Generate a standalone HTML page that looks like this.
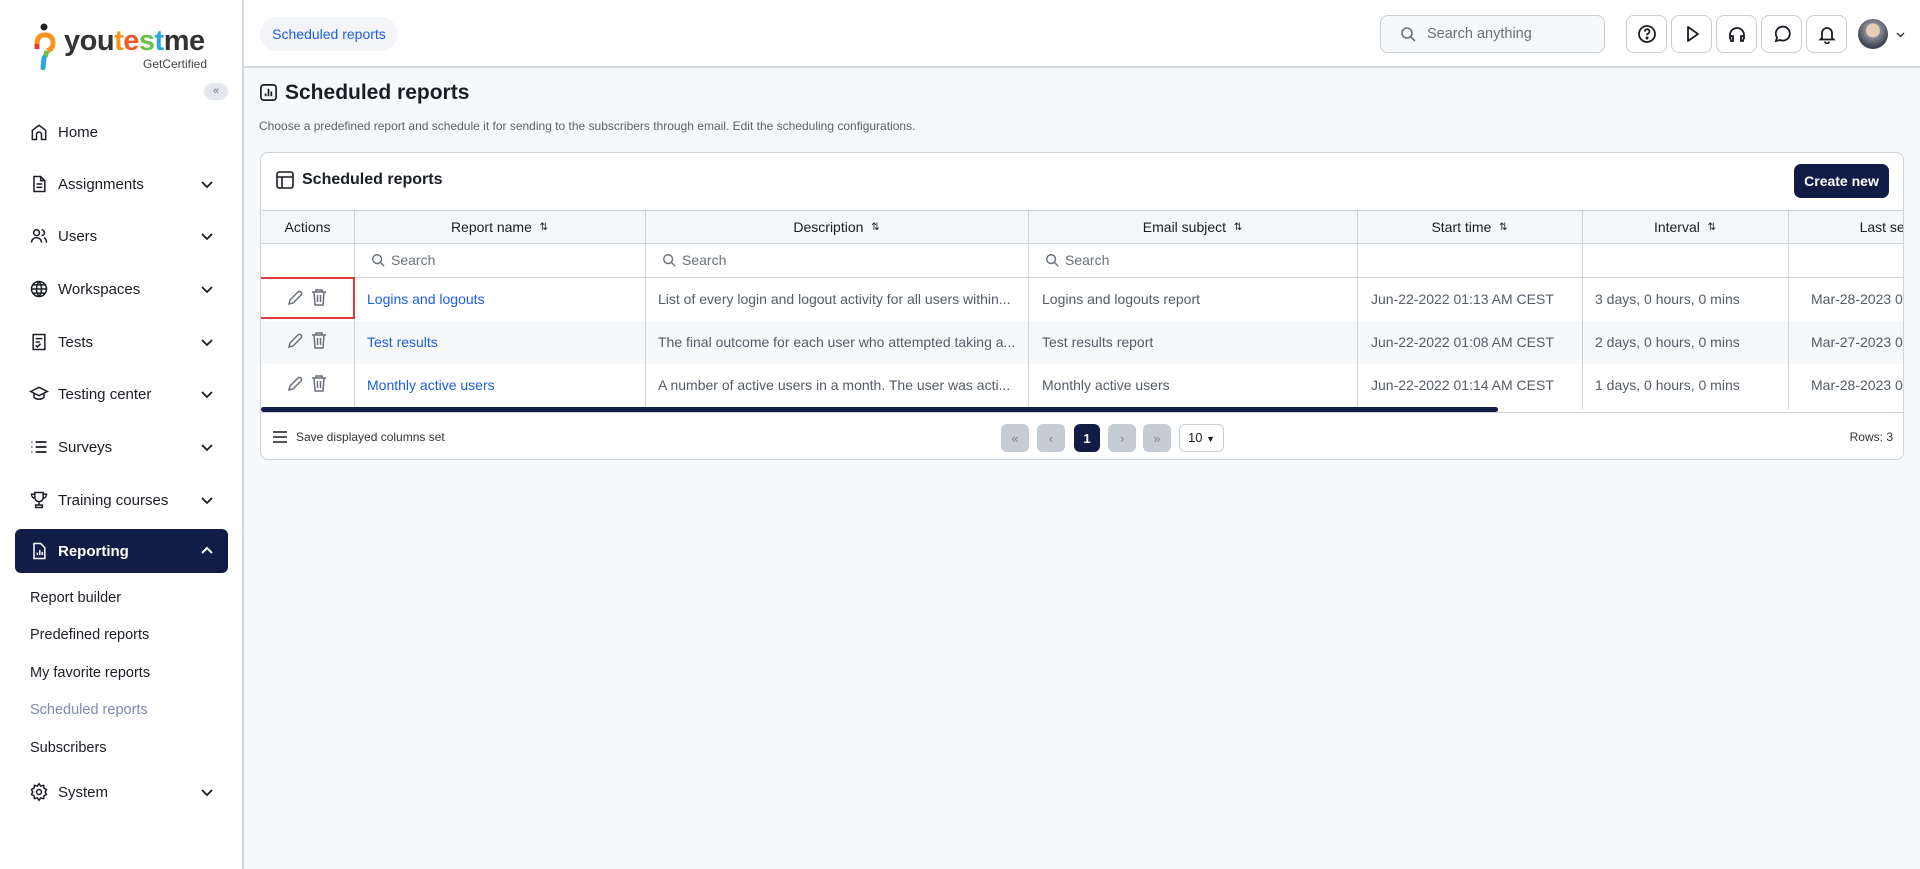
<!DOCTYPE html>
<html><head><meta charset="utf-8"><style>
*{box-sizing:border-box;margin:0;padding:0}
body{width:1920px;height:869px;overflow:hidden;background:#f7f8fa;font-family:"Liberation Sans",sans-serif;color:#1a1d24;position:relative}
.sb{position:absolute;left:0;top:0;width:244px;height:869px;background:#fff;border-right:2px solid #d6dbe1}
.abs{position:absolute}
.mi{position:absolute;left:29px;width:200px;height:30px;display:flex;align-items:center;font-size:15px;color:#1a1d24}
.mi svg.ic{width:20px;height:20px;margin-right:9px;flex:none}
.mi .chev{position:absolute;left:170px;width:16px;height:16px}
.sub{position:absolute;left:30px;font-size:14.5px;color:#1a1d24}
.top{position:absolute;left:244px;top:0;width:1676px;height:68px;background:#fff;border-bottom:2px solid #d6dbe1}
.ib{position:absolute;top:15px;width:41px;height:38px;border:1px solid #c7ced6;border-radius:8px;background:#fff;display:flex;align-items:center;justify-content:center}
.card{position:absolute;left:260px;top:152px;width:1644px;height:308px;background:#fff;border:1px solid #ccd3db;border-radius:8px;overflow:hidden}
.th{position:absolute;top:57px;height:34px;background:#f5f6f8;border-top:1px solid #ccd3db;border-bottom:1px solid #ccd3db;font-size:14px;display:flex;align-items:center;justify-content:center}
.col{position:absolute;top:57px;height:199px;border-left:1px solid #ccd3db}
.cell{position:absolute;font-size:14px;color:#555b66;white-space:nowrap}
.srch{position:absolute;font-size:14px;color:#6a707a;display:flex;align-items:center}
.srch svg{margin-right:6px}
.lnk{color:#1a5de6}
.pb{position:absolute;top:271px;width:28px;height:28px;border-radius:6px;background:#c5ccd5;color:#7d8693;font-size:13px;display:flex;align-items:center;justify-content:center}
</style></head><body>
<div class="sb">
 <svg class="abs" style="left:33px;top:22px" width="24" height="48" viewBox="0 0 24 48"><circle cx="11" cy="5" r="3.5" fill="#222"/><path d="M4 22 Q4 13 12 13 Q20 13 20 21 Q20 27 14 29" stroke="#f7941d" stroke-width="5" fill="none"/><path d="M14 29 L12 35" stroke="#6cc04a" stroke-width="5"/><path d="M11 36 L10 46" stroke="#29a8e0" stroke-width="5" stroke-linecap="round"/><path d="M4 22 L4 27" stroke="#e63c2f" stroke-width="5"/></svg>
 <div class="abs" style="left:64px;top:27px;font-size:29px;font-weight:bold;letter-spacing:-0.5px;line-height:1"><span style="color:#333">you</span><span style="color:#f7941d">t</span><span style="color:#f05a28">e</span><span style="color:#6cc04a">s</span><span style="color:#29a8e0">t</span><span style="color:#333">me</span></div>
 <div class="abs" style="left:143px;top:57px;font-size:12px;color:#444">GetCertified</div>
 <div class="abs" style="left:204px;top:83px;width:24px;height:17px;border-radius:8px;background:#e3e6ea;font-size:11px;color:#777;text-align:center;line-height:17px">«</div>

 <div class="mi" style="top:117px"><svg class="ic" viewBox="0 0 24 24" fill="none" stroke="#1a1d24" stroke-width="1.8"><path d="M4 21V10l8-6 8 6v11h-5v-6a3 3 0 0 0-6 0v6z"/></svg>Home</div>
 <div class="mi" style="top:169px"><svg class="ic" viewBox="0 0 24 24" fill="none" stroke="#1a1d24" stroke-width="1.8"><path d="M6 3h8l5 5v13H6z M14 3v5h5 M9 12h7 M9 16h7"/></svg>Assignments<svg class="chev" viewBox="0 0 16 16" fill="none" stroke="#1a1d24" stroke-width="1.8"><path d="M3 6l5 5 5-5"/></svg></div>
 <div class="mi" style="top:221px"><svg class="ic" viewBox="0 0 24 24" fill="none" stroke="#1a1d24" stroke-width="1.8"><circle cx="9" cy="8" r="3.5"/><path d="M3 20c0-4 3-6 6-6s6 2 6 6 M15 4.5a3.5 3.5 0 0 1 0 7 M18 14c2 1 3 3 3 6"/></svg>Users<svg class="chev" viewBox="0 0 16 16" fill="none" stroke="#1a1d24" stroke-width="1.8"><path d="M3 6l5 5 5-5"/></svg></div>
 <div class="mi" style="top:274px"><svg class="ic" viewBox="0 0 24 24" fill="none" stroke="#1a1d24" stroke-width="1.8"><circle cx="12" cy="12" r="9"/><path d="M3 12h18 M12 3c-4 5-4 13 0 18 M12 3c4 5 4 13 0 18 M5 7h14 M5 17h14"/></svg>Workspaces<svg class="chev" viewBox="0 0 16 16" fill="none" stroke="#1a1d24" stroke-width="1.8"><path d="M3 6l5 5 5-5"/></svg></div>
 <div class="mi" style="top:327px"><svg class="ic" viewBox="0 0 24 24" fill="none" stroke="#1a1d24" stroke-width="1.8"><path d="M5 3h14v18H5z M8 8h8 M8 12h5 M8 16l2 2 4-4"/></svg>Tests<svg class="chev" viewBox="0 0 16 16" fill="none" stroke="#1a1d24" stroke-width="1.8"><path d="M3 6l5 5 5-5"/></svg></div>
 <div class="mi" style="top:379px"><svg class="ic" viewBox="0 0 24 24" fill="none" stroke="#1a1d24" stroke-width="1.8"><path d="M2 9l10-5 10 5-10 5z M6 11v5c3 3 9 3 12 0v-5"/></svg>Testing center<svg class="chev" viewBox="0 0 16 16" fill="none" stroke="#1a1d24" stroke-width="1.8"><path d="M3 6l5 5 5-5"/></svg></div>
 <div class="mi" style="top:432px"><svg class="ic" viewBox="0 0 24 24" fill="none" stroke="#1a1d24" stroke-width="2"><path d="M8 6h13 M8 12h13 M8 18h13 M3 6h1 M3 12h1 M3 18h1"/></svg>Surveys<svg class="chev" viewBox="0 0 16 16" fill="none" stroke="#1a1d24" stroke-width="1.8"><path d="M3 6l5 5 5-5"/></svg></div>
 <div class="mi" style="top:485px"><svg class="ic" viewBox="0 0 24 24" fill="none" stroke="#1a1d24" stroke-width="1.8"><path d="M7 3h10v6a5 5 0 0 1-10 0z M7 5H3c0 3 2 5 4 5 M17 5h4c0 3-2 5-4 5 M12 14v4 M8 21h8v-3H8z"/></svg>Training courses<svg class="chev" viewBox="0 0 16 16" fill="none" stroke="#1a1d24" stroke-width="1.8"><path d="M3 6l5 5 5-5"/></svg></div>
 <div class="abs" style="left:15px;top:529px;width:213px;height:44px;background:#111d47;border-radius:6px"></div>
 <div class="mi" style="top:536px;color:#fff;font-weight:bold"><svg class="ic" viewBox="0 0 24 24" fill="none" stroke="#fff" stroke-width="1.8"><path d="M6 3h8l5 5v13H6z M10 17v-3 M13 17v-6 M16 17v-4"/></svg>Reporting<svg class="chev" viewBox="0 0 16 16" fill="none" stroke="#fff" stroke-width="2"><path d="M3 10l5-5 5 5"/></svg></div>
 <div class="sub" style="top:590px">Report builder</div>
 <div class="sub" style="top:627px">Predefined reports</div>
 <div class="sub" style="top:665px">My favorite reports</div>
 <div class="sub" style="top:702px;color:#8089b0">Scheduled reports</div>
 <div class="sub" style="top:740px">Subscribers</div>
 <div class="mi" style="top:777px"><svg class="ic" viewBox="0 0 24 24" fill="none" stroke="#1a1d24" stroke-width="1.8"><circle cx="12" cy="12" r="3"/><path d="M12 2l2 3 3.5-1 .5 3.5 3 1.5-1.5 3 1.5 3-3 1.5-.5 3.5-3.5-1-2 3-2-3-3.5 1-.5-3.5-3-1.5 1.5-3L3 9l3-1.5.5-3.5 3.5 1z"/></svg>System<svg class="chev" viewBox="0 0 16 16" fill="none" stroke="#1a1d24" stroke-width="1.8"><path d="M3 6l5 5 5-5"/></svg></div>
</div>

<div class="top">
 <div class="abs" style="left:16px;top:17px;height:34px;width:138px;border-radius:17px;background:#f3f5f8;color:#1a5de6;font-size:14px;line-height:34px;text-align:center">Scheduled reports</div>
 <div class="abs" style="left:1136px;top:15px;width:225px;height:38px;border:1px solid #c7ced6;border-radius:8px;background:#f7f8fa;font-size:14.5px;color:#6a707a;line-height:36px;padding-left:46px">Search anything</div>
 <svg class="abs" style="left:1156px;top:26px" width="16" height="16" viewBox="0 0 16 16" fill="none" stroke="#6a707a" stroke-width="1.6"><circle cx="7" cy="7" r="5"/><path d="M11 11l4 4"/></svg>
 <div class="ib" style="left:1382px"><svg width="20" height="20" viewBox="0 0 20 20" fill="none" stroke="#1a1d24" stroke-width="1.8"><circle cx="10" cy="10" r="8"/><path d="M7.8 7.5a2.3 2.3 0 1 1 3 2.2c-.6.3-.8.7-.8 1.5"/><circle cx="10" cy="14" r=".6" fill="#1a1d24"/></svg></div>
 <div class="ib" style="left:1427px"><svg width="20" height="20" viewBox="0 0 20 20" fill="none" stroke="#1a1d24" stroke-width="1.8" stroke-linejoin="round"><path d="M6 3l10 7-10 7z"/></svg></div>
 <div class="ib" style="left:1472px"><svg width="20" height="20" viewBox="0 0 20 20" fill="none" stroke="#1a1d24" stroke-width="1.8"><path d="M3 15v-4a7 7 0 0 1 14 0v4 M3 12h3v5H4z M17 12h-3v5h2z"/></svg></div>
 <div class="ib" style="left:1517px"><svg width="20" height="20" viewBox="0 0 20 20" fill="none" stroke="#1a1d24" stroke-width="1.8"><path d="M4 17l1-3.5A7 7 0 1 1 8 16z"/></svg></div>
 <div class="ib" style="left:1562px"><svg width="20" height="20" viewBox="0 0 20 20" fill="none" stroke="#1a1d24" stroke-width="1.8"><path d="M5 14V9a5 5 0 0 1 10 0v5l1.5 1.5h-13z M8 17.5a2 2 0 0 0 4 0"/></svg></div>
 <div class="abs" style="left:1614px;top:19px;width:30px;height:30px;border-radius:50%;background:radial-gradient(circle at 50% 38%,#e8cdb8 0 28%,#8d8f96 30%,#3b4152 70%)"></div>
 <svg class="abs" style="left:1652px;top:31px" width="9" height="7" viewBox="0 0 9 7" fill="none" stroke="#333" stroke-width="1.4"><path d="M1 2l3.5 3.5L8 2"/></svg>
</div>

<svg class="abs" style="left:259px;top:83px" width="19" height="19" viewBox="0 0 20 20" fill="none" stroke="#1a1d24" stroke-width="1.8"><rect x="2" y="2" width="16" height="16" rx="3"/><path d="M7 14v-3 M10 14V6 M13 14v-5"/></svg>
<div class="abs" style="left:285px;top:81px;font-size:21px;font-weight:bold">Scheduled reports</div>
<div class="abs" style="left:259px;top:119px;font-size:12px;color:#5b616b">Choose a predefined report and schedule it for sending to the subscribers through email. Edit the scheduling configurations.</div>

<div class="card">
 <svg class="abs" style="left:15px;top:18px" width="18" height="18" viewBox="0 0 18 18" fill="none" stroke="#1a1d24" stroke-width="1.6"><rect x="1" y="1" width="16" height="16" rx="2"/><path d="M1 6h16 M6 6v11"/></svg>
 <div class="abs" style="left:41px;top:18px;font-size:16px;font-weight:bold">Scheduled reports</div>
 <div class="abs" style="left:1533px;top:11px;width:95px;height:34px;border-radius:7px;background:#111d47;color:#fff;font-size:14px;font-weight:bold;text-align:center;line-height:34px">Create new</div>

 <div class="th" style="left:0;width:1644px"></div>
 <div class="th" style="left:0;width:93px">Actions</div>
 <div class="th" style="left:93px;width:291px">Report name&nbsp;&nbsp;<span style="font-size:10px">⇅</span></div>
 <div class="th" style="left:384px;width:383px">Description&nbsp;&nbsp;<span style="font-size:10px">⇅</span></div>
 <div class="th" style="left:767px;width:329px">Email subject&nbsp;&nbsp;<span style="font-size:10px">⇅</span></div>
 <div class="th" style="left:1096px;width:225px">Start time&nbsp;&nbsp;<span style="font-size:10px">⇅</span></div>
 <div class="th" style="left:1321px;width:206px">Interval&nbsp;&nbsp;<span style="font-size:10px">⇅</span></div>
 <div class="th" style="left:1527px;width:200px">Last sent</div>

 <div class="abs" style="left:0;top:124px;width:1644px;height:1px;background:#ccd3db"></div>
 <div class="abs" style="left:0;top:168px;width:1644px;height:43px;background:#f7f8fa"></div>
 <div class="col" style="left:93px"></div><div class="col" style="left:384px"></div><div class="col" style="left:767px"></div><div class="col" style="left:1096px"></div><div class="col" style="left:1321px"></div><div class="col" style="left:1527px"></div>

 <div class="srch" style="left:110px;top:99px"><svg width="14" height="14" viewBox="0 0 16 16" fill="none" stroke="#6a707a" stroke-width="1.6"><circle cx="7" cy="7" r="5"/><path d="M11 11l4 4"/></svg>Search</div>
 <div class="srch" style="left:401px;top:99px"><svg width="14" height="14" viewBox="0 0 16 16" fill="none" stroke="#6a707a" stroke-width="1.6"><circle cx="7" cy="7" r="5"/><path d="M11 11l4 4"/></svg>Search</div>
 <div class="srch" style="left:784px;top:99px"><svg width="14" height="14" viewBox="0 0 16 16" fill="none" stroke="#6a707a" stroke-width="1.6"><circle cx="7" cy="7" r="5"/><path d="M11 11l4 4"/></svg>Search</div>

 <div class="abs" style="left:-2px;top:124px;width:96px;height:42px;border:2px solid #e0393e"></div>
 <svg class="abs" style="left:25px;top:136px" width="18" height="18" viewBox="0 0 18 18" fill="none" stroke="#6a707a" stroke-width="1.5"><path d="M3 15l1-4 8-8a2 2 0 0 1 3 3l-8 8z"/></svg>
 <svg class="abs" style="left:49px;top:135px" width="18" height="19" viewBox="0 0 18 19" fill="none" stroke="#6a707a" stroke-width="1.5"><path d="M2 4h14 M6 4V2h6v2 M4 4l1 13h8l1-13 M7.5 7v7 M10.5 7v7"/></svg>
 <svg class="abs" style="left:25px;top:179px" width="18" height="18" viewBox="0 0 18 18" fill="none" stroke="#6a707a" stroke-width="1.5"><path d="M3 15l1-4 8-8a2 2 0 0 1 3 3l-8 8z"/></svg>
 <svg class="abs" style="left:49px;top:178px" width="18" height="19" viewBox="0 0 18 19" fill="none" stroke="#6a707a" stroke-width="1.5"><path d="M2 4h14 M6 4V2h6v2 M4 4l1 13h8l1-13 M7.5 7v7 M10.5 7v7"/></svg>
 <svg class="abs" style="left:25px;top:222px" width="18" height="18" viewBox="0 0 18 18" fill="none" stroke="#6a707a" stroke-width="1.5"><path d="M3 15l1-4 8-8a2 2 0 0 1 3 3l-8 8z"/></svg>
 <svg class="abs" style="left:49px;top:221px" width="18" height="19" viewBox="0 0 18 19" fill="none" stroke="#6a707a" stroke-width="1.5"><path d="M2 4h14 M6 4V2h6v2 M4 4l1 13h8l1-13 M7.5 7v7 M10.5 7v7"/></svg>

 <div class="cell lnk" style="left:106px;top:138px">Logins and logouts</div>
 <div class="cell lnk" style="left:106px;top:181px">Test results</div>
 <div class="cell lnk" style="left:106px;top:224px">Monthly active users</div>
 <div class="cell" style="left:397px;top:138px">List of every login and logout activity for all users within...</div>
 <div class="cell" style="left:397px;top:181px">The final outcome for each user who attempted taking a...</div>
 <div class="cell" style="left:397px;top:224px">A number of active users in a month. The user was acti...</div>
 <div class="cell" style="left:781px;top:138px">Logins and logouts report</div>
 <div class="cell" style="left:781px;top:181px">Test results report</div>
 <div class="cell" style="left:781px;top:224px">Monthly active users</div>
 <div class="cell" style="left:1110px;top:138px">Jun-22-2022 01:13 AM CEST</div>
 <div class="cell" style="left:1110px;top:181px">Jun-22-2022 01:08 AM CEST</div>
 <div class="cell" style="left:1110px;top:224px">Jun-22-2022 01:14 AM CEST</div>
 <div class="cell" style="left:1334px;top:138px">3 days, 0 hours, 0 mins</div>
 <div class="cell" style="left:1334px;top:181px">2 days, 0 hours, 0 mins</div>
 <div class="cell" style="left:1334px;top:224px">1 days, 0 hours, 0 mins</div>
 <div class="cell" style="left:1550px;top:138px">Mar-28-2023 0</div>
 <div class="cell" style="left:1550px;top:181px">Mar-27-2023 0</div>
 <div class="cell" style="left:1550px;top:224px">Mar-28-2023 0</div>

 <div class="abs" style="left:0;top:254px;width:1237px;height:5px;border-radius:3px;background:#111d47"></div>
 <div class="abs" style="left:0;top:259px;width:1644px;height:1px;background:#ccd3db"></div>

 <svg class="abs" style="left:11px;top:277px" width="16" height="14" viewBox="0 0 16 14" stroke="#1a1d24" stroke-width="1.6"><path d="M1 2h14 M1 7h14 M1 12h14"/></svg>
 <div class="abs" style="left:35px;top:277px;font-size:12px;color:#333">Save displayed columns set</div>
 <div class="pb" style="left:740px">«</div>
 <div class="pb" style="left:776px">‹</div>
 <div class="pb" style="left:813px;width:26px;background:#111d47;color:#fff;font-weight:bold">1</div>
 <div class="pb" style="left:847px">›</div>
 <div class="pb" style="left:882px">»</div>
 <div class="abs" style="left:918px;top:271px;width:45px;height:28px;border:1px solid #c7ced6;border-radius:6px;font-size:13px;line-height:26px;padding-left:8px">10 <span style="font-size:9px">▼</span></div>
 <div class="abs" style="right:10px;top:277px;font-size:12px;color:#333">Rows: 3</div>
</div>
</body></html>
